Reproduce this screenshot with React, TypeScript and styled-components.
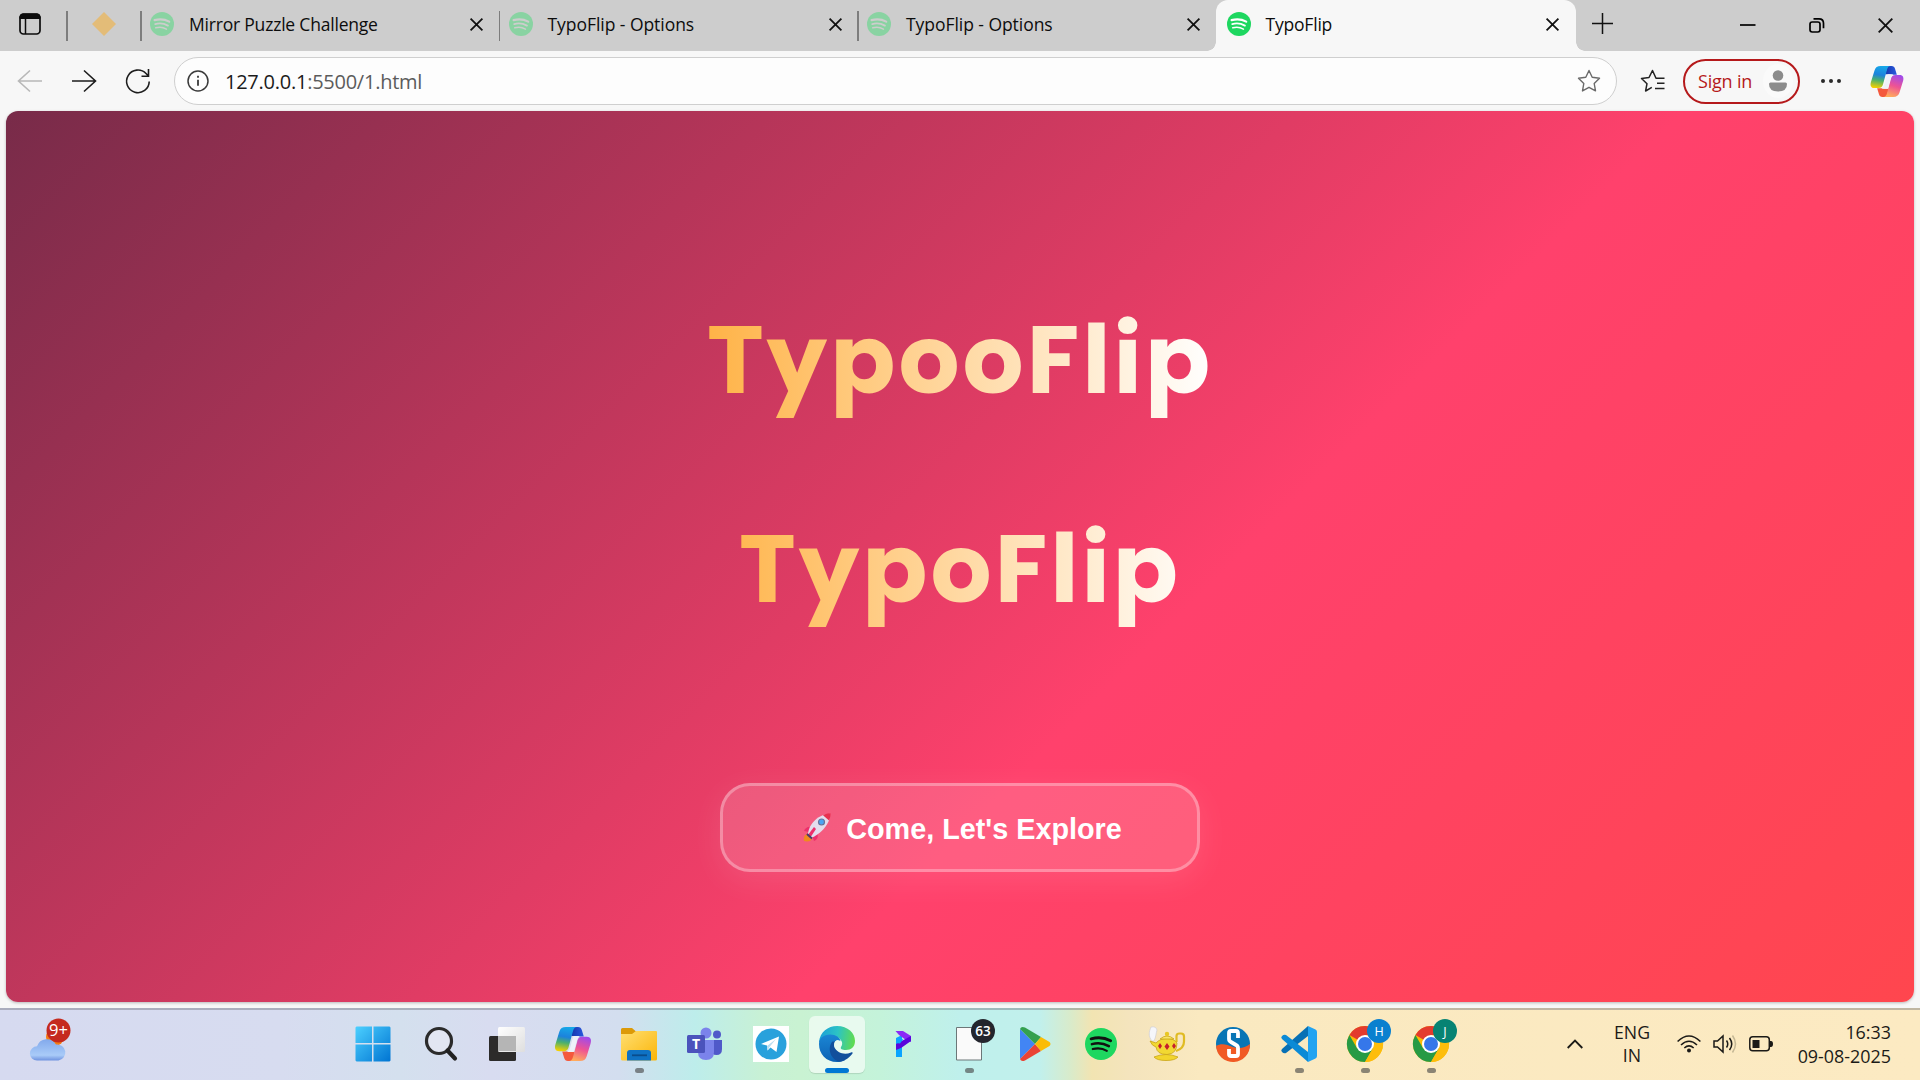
import React from 'react';
import styled, { createGlobalStyle } from 'styled-components';

const ui = '"Segoe UI", "Open Sans", "Noto Sans", sans-serif';

const Global = createGlobalStyle`
  * { box-sizing: border-box; }
  body { margin: 0; overflow: hidden; font-family: ${ui}; }
  svg { display: block; flex: none; overflow: visible; }
`;

const Screen = styled.div`
  width: 1920px;
  height: 1080px;
  display: flex;
  flex-direction: column;
  background: #f7f7f7;
  overflow: hidden;
`;

const TabStrip = styled.div`
  height: 51px;
  flex: none;
  display: flex;
  background: #cdcdcd;
`;
const StripLead = styled.div`
  width: 66px;
  padding: 13px 0 0 19px;
`;
const Divider = styled.i`
  width: 1.5px;
  height: 30px;
  margin: 11px 0.5px 0 0;
  flex: none;
  background: #7d7d7d;
`;
const Pinned = styled.div`
  width: 72px;
  padding: 12px 0 0 24px;
`;
const Tab = styled.div<{ $active?: boolean }>`
  width: ${p => (p.$active ? '360px' : '356.5px')};
  height: 51px;
  flex: none;
  display: flex;
  align-items: center;
  padding: 0 ${p => (p.$active ? '17px' : '15.5px')} 3px ${p => (p.$active ? '11px' : '8px')};
  color: #0c0c0c;
  font-size: 17.5px;
  position: relative;
  background: ${p => (p.$active ? '#f7f7f7' : 'transparent')};
  border-radius: ${p => (p.$active ? '12px 12px 0 0' : '0')};
  &::before, &::after {
    content: '';
    display: ${p => (p.$active ? 'block' : 'none')};
    position: absolute;
    bottom: 0;
    width: 9px;
    height: 9px;
  }
  &::before { left: -9px; background: radial-gradient(circle at 0 0, transparent 8.5px, #f7f7f7 9px); }
  &::after { right: -9px; background: radial-gradient(circle at 100% 0, transparent 8.5px, #f7f7f7 9px); }
`;
const TabTitle = styled.span<{ $track: number }>`
  flex: 1;
  margin-left: 15px;
  padding-bottom: 1px;
  white-space: nowrap;
  letter-spacing: ${p => p.$track}px;
`;
const NewTab = styled.div`
  padding: 13px 0 0 16px;
`;
const WindowButtons = styled.div`
  margin-left: auto;
  display: flex;
  padding: 18px 27px 0 0;
  gap: 53px;
`;

const Toolbar = styled.div`
  height: 60px;
  flex: none;
  display: flex;
  align-items: center;
  padding: 0 15px 0 17px;
`;
const Nav = styled.div`
  width: 157px;
  display: flex;
  gap: 29px;
`;
const Address = styled.div`
  width: 1443px;
  height: 48px;
  display: flex;
  align-items: center;
  padding: 0 15px 0 12px;
  border: 1.5px solid #cfcfcf;
  border-radius: 24px;
  background: #fdfdfd;
`;
const Url = styled.span`
  flex: 1;
  margin-left: 16px;
  font-size: 20px;
  letter-spacing: -0.25px;
  color: #5b5b5b;
  b { font-weight: 400; color: #1b1b1b; }
`;
const Collections = styled.div`
  margin-left: 23px;
`;
const SignIn = styled.div`
  width: 117px;
  height: 45px;
  margin-left: 18px;
  padding: 0 5px 0 13px;
  display: flex;
  align-items: center;
  justify-content: space-between;
  border: 2px solid #b5191b;
  border-radius: 23px;
  color: #b5191b;
  font-size: 18px;
  letter-spacing: -0.2px;
`;
const Avatar = styled.span`
  width: 30px;
  height: 34px;
  border-radius: 50%;
  background: #fafafa;
  display: grid;
  place-items: center;
`;
const More = styled.div`
  display: flex;
  gap: 4px;
  margin: 0 29px 0 21px;
  i { width: 4px; height: 4px; border-radius: 50%; background: #2a2a2a; }
`;

const Page = styled.main`
  height: 891px;
  margin: 0 6px 6px;
  flex: none;
  display: flex;
  flex-direction: column;
  align-items: center;
  border-radius: 12px;
  box-shadow: 0 1px 3px rgba(0, 0, 0, 0.25);
  background: linear-gradient(135deg, #782b49 0%, #ff416c 60%, #ff464e 100%);
`;
const Titles = styled.div`
  display: flex;
  flex-direction: column;
  gap: 65px;
  padding-top: 177px;
`;
const Title = styled.h1`
  margin: 0;
  height: 144px;
  line-height: 144px;
  text-align: center;
  font-family: Poppins, Inter, sans-serif;
  font-weight: 700;
  font-size: 96px;
  letter-spacing: 3px;
  color: transparent;
  background: linear-gradient(90deg, #ffb347, #ffffff);
  -webkit-background-clip: text;
  background-clip: text;
`;
const Explore = styled.button`
  width: 480px;
  height: 89px;
  margin-top: 142px;
  padding: 0 0 0 5px;
  display: flex;
  align-items: center;
  justify-content: center;
  gap: 15px;
  border: 3px solid rgba(255, 255, 255, 0.3);
  border-radius: 30px;
  background: rgba(255, 255, 255, 0.15);
  background-clip: border-box;
  box-shadow: 0 8px 32px rgba(255, 255, 255, 0.1);
  color: #fff;
  font: 700 28.8px "Liberation Sans", Arial, sans-serif;
`;
const ExploreText = styled.span`
  padding-top: 3px;
`;

const Taskbar = styled.footer`
  height: 72px;
  flex: none;
  display: flex;
  border-top: 2px solid rgba(110, 110, 120, 0.42);
  background: linear-gradient(90deg, #d6daf0 0, #d7dcf0 280px, #d4e0ee 400px, #d8dcf0 490px, #d3deef 620px,
    #bdedeb 695px, #c8f1d4 765px, #c9f2d2 800px, #c4f3da 880px, #bff0ec 960px, #c1f0ec 1040px, #d8ebcb 1070px,
    #f2e4b2 1092px, #f4e4bd 1130px, #fae9c0 1200px, #fceac2 1920px);
  color: #1b1a17;
`;
const Weather = styled.div`
  width: 342px;
  padding: 8px 0 0 30px;
`;
const Apps = styled.div`
  display: grid;
  grid-template-columns: repeat(17, 66px);
`;
const AppButton = styled.div<{ $active?: boolean }>`
  height: 57px;
  width: 56px;
  margin: 6px 5px 0;
  padding-top: 10px;
  display: flex;
  flex-direction: column;
  align-items: center;
  border-radius: 6px;
  background: ${p => (p.$active ? 'rgba(255,255,255,0.6)' : 'none')};
  box-shadow: ${p => (p.$active ? '0 1px 1px rgba(0,0,0,0.12)' : 'none')};
`;
const Indicator = styled.i<{ $on?: 'idle' | 'focus' }>`
  width: ${p => (p.$on === 'focus' ? 24 : 9)}px;
  height: 5px;
  margin-top: 6px;
  border-radius: 3px;
  background: ${p => (p.$on === 'focus' ? '#0078d4' : p.$on ? 'rgba(70,70,70,0.62)' : 'transparent')};
`;
const Tray = styled.div`
  margin-left: auto;
  display: flex;
  align-items: center;
  padding: 0 29px 2px 0;
`;
const Lang = styled.div`
  width: 46px;
  margin: 0 22px 0 26px;
  text-align: center;
  font-size: 17.7px;
  line-height: 23px;
`;
const Status = styled.div`
  display: flex;
  align-items: center;
  gap: 12px;
`;
const Clock = styled.div`
  width: 96px;
  margin-left: 22px;
  text-align: right;
  font-size: 17.9px;
  line-height: 24px;
  white-space: nowrap;
`;

const Spotify = ({ size = 24, body = '#1ed760', bars = '#fff' }) => (
  <svg width={size} height={size} viewBox="0 0 24 24">
    <circle cx="12" cy="12" r="12" fill={body} />
    <g fill="none" stroke={bars} strokeLinecap="round">
      <path d="M4.600 8.100C9.300 6.800 14.900 7.200 19.200 9.600" strokeWidth="2.200" />
      <path d="M5.200 12.100C9.400 10.900 14 11.400 17.900 13.600" strokeWidth="1.900" />
      <path d="M5.800 15.800C9.300 14.900 13.200 15.200 16.400 17.100" strokeWidth="1.600" />
    </g>
  </svg>
);

const Cross = ({ size = 13, w = 1.8 }) => (
  <svg width={size} height={size} viewBox="0 0 13 13">
    <path d="M.6 .6 12.400 12.400M12.400 .6 .6 12.400" stroke="#111" strokeWidth={w} />
  </svg>
);

const Copilot = ({ id, w = 36, h = 34 }: { id: string; w?: number; h?: number }) => (
  <svg width={w} height={h} viewBox="0 0 36 34">
    <defs>
      <linearGradient id={id + 'a'} x1="0.5" y1="0" x2="0.35" y2="1">
        <stop offset="0" stopColor="#16a7e8" /><stop offset=".4" stopColor="#1c82dc" />
        <stop offset=".65" stopColor="#4bb06d" /><stop offset="1" stopColor="#f5d000" />
      </linearGradient>
      <linearGradient id={id + 'b'} x1="0.7" y1="0" x2="0.4" y2="1">
        <stop offset="0" stopColor="#a04bea" /><stop offset=".5" stopColor="#ee5394" /><stop offset="1" stopColor="#ffab5c" />
      </linearGradient>
      <linearGradient id={id + 'c'} x1="1" y1="0" x2="0" y2="0">
        <stop offset="0" stopColor="#2a5be0" /><stop offset="1" stopColor="#1636ac" />
      </linearGradient>
    </defs>
    <path d="M18 0h5c2.200 0 3.200 1 3.800 3l2 6.500h-3c-2.800 0-4-.5-6.500-.5h-3z" fill={`url(#${id}c)`} />
    <path d="M18 34h-5c-2.200 0-3.200-1-3.800-3l-2-6.500h3c2.800 0 4 .5 6.500 .5h3z" fill="#f4593d" />
    <path d="M11 0h11c-2 0-3.200 1.200-4 4l-4.200 15.500c-.9 3.300-2 4.700-5.300 4.700H4.200C.3 24.200-.7 21.200 .4 17.500L4.300 4.800C5.400 1.400 7.300 0 11 0z" fill={`url(#${id}a)`} />
    <path d="M25 34H14c2 0 3.200-1.200 4-4l4.200-15.500c.9-3.300 2-4.700 5.300-4.700h4.300c3.900 0 4.900 3 3.800 6.700l-3.900 12.700C30.600 32.600 28.700 34 25 34z" fill={`url(#${id}b)`} />
    <path d="M19.500 9h5.500c-1.800 1-2.500 2.500-3.300 5.500l-2.600 9.500c-.2 .8-.7 1-1.500 1H12c2-1.200 2.800-3 3.300-5l2.400-9c.4-1.400 .8-2 1.800-2z" fill="#eef1fa" />
  </svg>
);

const StarPath = 'M12 1.500l3.200 6.800 7.300 1-5.300 5.200 1.300 7.400L12 18.300 5.500 21.900l1.300-7.400L1.500 9.300l7.300-1z';

const Rocket = () => (
  <svg width="28" height="29" viewBox="0 0 28 29">
    <path d="M1 28c-1-4 1-7 4-7l4 4c0 3-4 4-8 3z" fill="#f08a1d" />
    <path d="M9 14c-4-1-7 1-8 4l5 1zM14 20c2 4 0 7-3 8l-2-6z" fill="#ed2f6b" />
    <path d="M5 22c0-9 8-20 22-21.500C28 10 18 21 8 25z" fill="#e4dcec" />
    <path d="M20 2.300C23 .7 26 .2 27.500 .4c.2 2-.3 4.500-1.500 7z" fill="#e8304f" />
    <path d="M4.500 22.500 11 14l2 2-6 9z" fill="#ed2f6b" />
    <path d="M4 21l5 4.500" stroke="#4b3a69" strokeWidth="2" />
    <circle cx="18.500" cy="9" r="3" fill="#4ba4f3" stroke="#69739a" strokeWidth="1.200" />
  </svg>
);

const Chrome = ({ letter, color }: { letter: string; color: string }) => (
  <svg width="36" height="36" viewBox="0 0 36 36">
    <circle cx="18" cy="18" r="18" fill="#fbbc05" />
    <path d="M18 18 2.400 9A18 18 0 0 1 33.600 9z" fill="#e33b2e" />
    <path d="M2.400 9A18 18 0 0 0 18 36l7.800-13.500L18 18l-7.800 4.500z" fill="#269a45" />
    <path d="M18 9h15.600A18 18 0 0 1 18 36l7.800-13.500z" fill="#fdbd0b" />
    <circle cx="18" cy="18" r="9" fill="#fff" /><circle cx="18" cy="18" r="7" fill="#3577ea" />
    <circle cx="32" cy="5" r="12" fill={color} />
    <text x="32" y="9.800" fontSize="12.500" fontFamily={ui} fill="#fff" textAnchor="middle">{letter}</text>
  </svg>
);

const icons: Record<string, React.ReactNode> = {
  start: (
    <svg width="36" height="36" viewBox="2 0 36 36">
      <defs><linearGradient id="win" x1="0" y1="0" x2="1" y2="1"><stop offset="0" stopColor="#4cd0ff" /><stop offset="1" stopColor="#0074d2" /></linearGradient></defs>
      <path d="M1.500 .5H17V17H.5V1.500zM18.500 .5H34.500l1 1V17h-17zM.5 18.500H17v17H1.500l-1-1zM18.500 18.500h17v16l-1 1h-16z" fill="url(#win)" />
    </svg>
  ),
  search: (
    <svg width="36" height="36" viewBox="0 0 36 36">
      <circle cx="16" cy="15" r="12.500" fill="#e2e6f2" stroke="#2b2b2b" strokeWidth="3.200" />
      <path d="M24.500 24.500l7.500 8" stroke="#222" strokeWidth="4.200" strokeLinecap="round" />
    </svg>
  ),
  view: (
    <svg width="36" height="36" viewBox="0 0 36 36">
      <defs><linearGradient id="tv" x1="0" y1="0" x2="1" y2="1"><stop offset="0" stopColor="#fff" /><stop offset="1" stopColor="#dedede" /></linearGradient></defs>
      <rect x="0" y="10" width="27" height="25" rx="1.500" fill="#2c2b2a" />
      <rect x="9" y="1" width="27" height="25" rx="1.500" fill="url(#tv)" />
      <path d="M9 10h18v15H9z" fill="#b5b5b5" />
    </svg>
  ),
  copilot: <svg width="36" height="36"><g transform="translate(0 1)"><Copilot id="tc" w={36} h={34} /></g></svg>,
  files: (
    <svg width="36" height="36" viewBox="0 0 36 36">
      <defs><linearGradient id="fold" x1="0" y1="0" x2="1" y2="1"><stop offset="0" stopColor="#ffdf72" /><stop offset="1" stopColor="#fbb508" /></linearGradient></defs>
      <path d="M0 3.500Q0 2 1.500 2H11l4 3.500h20V12H0z" fill="#dc9a08" />
      <path d="M0 8h11l4-3h20q1 0 1 1v27q0 1.500-1.500 1.500h-33Q0 34.500 0 33z" fill="url(#fold)" />
      <path d="M6 34.500V27q0-3 3-3h18q3 0 3 3v7.500z" fill="#0f72c4" />
      <path d="M11 29.300h15" stroke="#0a4c8c" strokeWidth="1.800" />
    </svg>
  ),
  teams: (
    <svg width="36" height="36" viewBox="0 0 36 36">
      <circle cx="19" cy="7" r="5.500" fill="#7b83eb" /><circle cx="30" cy="8.500" r="4" fill="#5059c9" />
      <path d="M26 14h9v9q0 6-5.500 6T24 24z" fill="#5059c9" />
      <path d="M11 14h16v12q0 8-8 8t-8-8z" fill="#7b83eb" />
      <rect x="0" y="9" width="18" height="18" rx="1.500" fill="#4b53bc" />
      <text x="9" y="23" fontSize="14" fontWeight="700" fontFamily={ui} fill="#fff" textAnchor="middle">T</text>
    </svg>
  ),
  telegram: (
    <svg width="36" height="36" viewBox="0 0 36 36">
      <path d="M0 0h36v36H0z" fill="#fff" /><circle cx="18" cy="18" r="15.500" fill="#29a1dc" />
      <path d="M8 18 26 10.500 23.500 26 17.500 21.500 14.500 24.500 14 19.500z" fill="#fff" /><path d="M14 20l9-7-6.500 8-2 3.500z" fill="#b9dcf0" />
    </svg>
  ),
  edge: (
    <svg width="36" height="36" viewBox="0 0 36 36">
      <defs>
        <linearGradient id="eg" x1="0" y1=".4" x2="1" y2=".5"><stop offset="0" stopColor="#1b9fd8" /><stop offset=".5" stopColor="#2cc3c5" /><stop offset="1" stopColor="#61dc4e" /></linearGradient>
        <linearGradient id="eb" x1="0" y1="0" x2="0" y2="1"><stop offset="0" stopColor="#1b86d4" /><stop offset="1" stopColor="#0c62b4" /></linearGradient>
      </defs>
      <path d="M0 16C1 6 9 0 18 0c11 0 18 7 18 15 0 6-4 9-9 9-4 0-6-1-5-3 3-4 0-8-4-10z" fill="url(#eg)" />
      <path d="M0 18C0 12 5 8.500 11 8.500c6 0 10 3 10.500 6.500C18 13 14 16 14 21c0 8 6 13 12 13-3 1.500-5 2-8 2C7 36 0 28 0 18z" fill="url(#eb)" />
      <path d="M13.500 15.500C8 21 11 34 21 35.700 27 34.500 31 31 33.500 27.500c.5-1-.5-1.500-1.500-1-7 3-14 0-16.500-5-.8-2-.4-4 .5-6z" fill="#124f9c" />
      <path d="M18 14.300c-3 1-3.200 4.500-2 7 1.200 2.400 3.500 3.400 5.600 3.200-1.200-1-1-2.500-.2-3.700 1.500-2.500-.5-6.800-3.400-6.500z" fill="#e9faee" />
    </svg>
  ),
  p: (
    <svg width="36" height="36" viewBox="0 0 36 36">
      <path d="M11 12l6-3v22h-6z" fill="#0aa4ff" /><path d="M10.500 5H18l8 5v6l-5-2-7-5z" fill="#8c2bf5" /><path d="M11 18 26 10v5l-10 7-5 2z" fill="#5a06dc" />
      <path d="M11 17l5-5 2 1.500-3 4z" fill="#0aa4ff" />
    </svg>
  ),
  doc: (
    <svg width="36" height="36" viewBox="0 0 36 36">
      <path d="M5.500 1.500h25v32.500h-25z" fill="#fafafa" stroke="#6c7778" strokeWidth="1" />
      <circle cx="32" cy="5" r="12" fill="#23252d" />
      <text x="32" y="10" fontSize="13.500" fontWeight="600" fontFamily={ui} fill="#fff" textAnchor="middle">63</text>
    </svg>
  ),
  play: (
    <svg width="36" height="36" viewBox="0 0 36 36">
      <path d="M3 3v30l15-15z" fill="#4285f4" /><path d="M3 3q1-3 5-1.500L24 11l-6 7z" fill="#34a04e" />
      <path d="M3 33q1 3 5 1.500L24 25l-6-7z" fill="#ea4335" /><path d="M24 11l8.500 5q2 2 0 4L24 25l-6-7z" fill="#fbbc04" />
    </svg>
  ),
  spotify: <svg width="36" height="36"><g transform="translate(2 2)"><Spotify size={32} body="#1ed760" bars="#111" /></g></svg>,
  lamp: (
    <svg width="36" height="36" viewBox="0 0 36 36">
      <path d="M3 15C-1 10 0 6 2 1q5-1 6 3c-1 3-1 7-3 11z" fill="#f5f6fa" stroke="#c9cad2" strokeWidth=".6" />
      <path d="M27.500 16V10q0-2.500 3-2.500h1.500q3 0 3 3v5q0 7-8 9.500" fill="none" stroke="#e0bb22" strokeWidth="2.200" />
      <path d="M1 15l6 2q4-4.500 11-4.500T28 17q0 11-10 11.500Q8 28.500 7 21q-4-1-6-6z" fill="#f2d832" stroke="#c9a416" strokeWidth=".8" />
      <path d="M11 13q7-6 14 0z" fill="#f9e566" stroke="#c9a416" strokeWidth=".8" /><circle cx="18" cy="8" r="2.200" fill="#e9c722" />
      <path d="M5 31q12-5 24 0-3 3.500-12 3.500T5 31z" fill="#f2d52c" stroke="#c9a416" strokeWidth=".8" />
      <path d="M11 17l2 3-2 3-2-3zM18 17l2.500 3.500L18 24l-2.500-3.500zM25 17l2 3-2 3-2-3z" fill="#c6202c" />
    </svg>
  ),
  s: (
    <svg width="36" height="36" viewBox="0 0 36 36">
      <circle cx="18" cy="18" r="17" fill="#0875b5" /><path d="M1 20c5-3 10-2 17 1 6 2 12 1 17-3a17 17 0 0 1-34 2z" fill="#f15a24" />
      <path d="M23 12V7q0-2-2-2h-5q-2 0-2 2v6q0 2 2 3l5 3q2 1 2 3v6q0 2-2 2h-5q-2 0-2-2v-5" fill="none" stroke="#fff" strokeWidth="3.800" />
    </svg>
  ),
  code: (
    <svg width="36" height="36" viewBox="0 0 36 36">
      <path d="M1 23 27 0v10L5 27q-2 1-4-1-1.500-1.500 0-3z" fill="#0770b5" />
      <path d="M1 13 27 36V26L5 9Q3 8 1 10q-1.500 1.500 0 3z" fill="#0b8ad6" />
      <path d="M27 0l7.500 3.500Q36 4.300 36 6v24q0 1.700-1.500 2.500L27 36z" fill="#22a3f1" />
    </svg>
  ),
  h: <Chrome letter="H" color="#0a80cf" />,
  j: <Chrome letter="J" color="#078373" />,
};
const running = ['files', 'doc', 'code', 'h', 'j'];

export default function App() {
  return (
    <Screen>
      <Global />
      <TabStrip>
        <StripLead>
          <svg width="22" height="22" viewBox="0 0 22 22">
            <rect x="1" y="1" width="20" height="20" rx="3.500" fill="none" stroke="#0c0c0c" strokeWidth="1.700" />
            <path d="M1 5.500V4q0-3 3-3h14q3 0 3 3v1.500z" fill="#0c0c0c" stroke="#0c0c0c" strokeWidth="1" />
            <path d="M6.500 5v16" stroke="#0c0c0c" strokeWidth="1.500" />
          </svg>
        </StripLead>
        <Divider />
        <Pinned><svg width="24" height="24"><path d="M12 0 24 12 12 24 0 12z" fill="#e3bc78" /></svg></Pinned>
        {['Mirror Puzzle Challenge', 'TypoFlip - Options', 'TypoFlip - Options'].map((t, i) => (
          <React.Fragment key={i}>
            <Divider />
            <Tab>
              <Spotify body="#89d3a2" bars="#cdcdcd" />
              <TabTitle $track={i ? -0.05 : -0.2}>{t}</TabTitle>
              <Cross />
            </Tab>
          </React.Fragment>
        ))}
        <Tab $active>
          <Spotify />
          <TabTitle $track={-0.2}>TypoFlip</TabTitle>
          <Cross />
        </Tab>
        <NewTab><svg width="21" height="21"><path d="M10.500 0v21M0 10.500h21" stroke="#111" strokeWidth="1.500" /></svg></NewTab>
        <WindowButtons>
          <svg width="16" height="16"><path d="M0 7h15.500" stroke="#000" strokeWidth="1.700" /></svg>
          <svg width="16" height="16" viewBox="0 0 16 16" fill="none" stroke="#000" strokeWidth="1.700">
            <rect x="1" y="4" width="10" height="10" rx="2.200" /><path d="M4.500 .8H10q4.500 0 4.500 4.500v5" />
          </svg>
          <Cross size={15} w={1.6} />
        </WindowButtons>
      </TabStrip>

      <Toolbar>
        <Nav>
          <svg width="25" height="24" fill="none" stroke="#b8b8b8" strokeWidth="1.600"><path d="M25 12H1.500M13 1.500 1.500 12 13 22.500" /></svg>
          <svg width="25" height="24" fill="none" stroke="#1d1d1d" strokeWidth="1.600"><path d="M1 12h23.500M13 1.500 24.500 12 13 22.500" /></svg>
          <svg width="25" height="24" fill="none" stroke="#1d1d1d" strokeWidth="1.600"><path d="M24.200 12.500A11.300 11.300 0 1 1 21 4.500l2.500 2.500M23.500 0v7.200H16.500" /></svg>
        </Nav>
        <Address>
          <svg width="22" height="22" fill="none" stroke="#3a3a3a" strokeWidth="1.500"><circle cx="11" cy="11" r="10" /><path d="M11 9.800v6M11 5.800v2" strokeWidth="1.800" /></svg>
          <Url><b>127.0.0.1</b>:5500/1.html</Url>
          <svg width="24" height="24" viewBox="0 0 24 24" fill="none" stroke="#6a6a6a" strokeWidth="1.400" strokeLinejoin="round"><path d={StarPath} /></svg>
        </Address>
        <Collections>
          <svg width="25" height="24" viewBox="0 0 25 24" fill="none" stroke="#222" strokeWidth="1.500" strokeLinejoin="round">
            <path d="M24.500 9.300H16L12.500 1.500 9 8.500l-7.500 1 5.500 5.200-1.400 7.300 6.200-3.700M17 14.300h7.500M15 19.500h9.500" />
          </svg>
        </Collections>
        <SignIn>
          Sign in
          <Avatar><svg width="18" height="22" fill="#8c8c8c"><circle cx="9" cy="5.500" r="5.300" /><path d="M0 14q0-1.500 1.500-1.500h15Q18 12.500 18 14q0 7.500-9 7.500T0 14z" /></svg></Avatar>
        </SignIn>
        <More><i /><i /><i /></More>
        <Copilot id="tb" w={34} h={31} />
      </Toolbar>

      <Page>
        <Titles>
          <Title>TypooFlip</Title>
          <Title>TypoFlip</Title>
        </Titles>
        <Explore><Rocket /><ExploreText>Come, Let's Explore</ExploreText></Explore>
      </Page>

      <Taskbar>
        <Weather>
          <svg width="42" height="44" viewBox="0 0 42 44">
            <circle cx="25" cy="19" r="9" fill="#f57c13" />
            <defs><linearGradient id="cl" x1="0" y1="0" x2="0" y2="1"><stop offset="0" stopColor="#82a9ec" /><stop offset=".75" stopColor="#a9cbf8" /><stop offset="1" stopColor="#6e92df" /></linearGradient></defs>
            <path d="M7 42.500a7 7 0 0 1 0-14.200A10.500 10.500 0 0 1 26 26.500a8 8 0 0 1 2.500 16z" fill="url(#cl)" />
            <circle cx="28.500" cy="12.500" r="12" fill="#c52a1e" />
            <text x="28.500" y="18" fontSize="16.500" fontFamily={ui} fill="#fff" textAnchor="middle">9+</text>
          </svg>
        </Weather>
        <Apps>
          {Object.keys(icons).map(k => (
            <AppButton key={k} $active={k === 'edge'}>
              {icons[k]}
              <Indicator $on={k === 'edge' ? 'focus' : running.includes(k) ? 'idle' : undefined} />
            </AppButton>
          ))}
        </Apps>
        <Tray>
          <svg width="16" height="10" fill="none" stroke="#1b1a17" strokeWidth="1.800"><path d="M.7 9 8 1.500 15.300 9" /></svg>
          <Lang>ENG<br />IN</Lang>
          <Status>
            <svg width="24" height="18" viewBox="0 0 24 18" fill="none" stroke="#1b1a17" strokeWidth="1.600">
              <path d="M.6 6.500q11.400-11 22.800 0M4 10q8-7.500 16 0M7.300 13q4.700-4.200 9.400 0" /><circle cx="12" cy="15.600" r="2" fill="#1b1a17" stroke="none" />
            </svg>
            <svg width="24" height="20" viewBox="0 0 24 20" fill="none" stroke="#1b1a17" strokeWidth="1.500">
              <path d="M1 7h3.500L10 2v16l-5.500-5H1zM13.500 6.500q2.500 3.500 0 7M16.500 4q4.500 6 0 12" /><path d="M19.500 1.500q6 8.500 0 17" stroke="#c4b795" />
            </svg>
            <svg width="24" height="16" viewBox="0 0 24 16">
              <rect x=".8" y=".8" width="19.500" height="14" rx="3" fill="none" stroke="#1b1a17" strokeWidth="1.500" />
              <path d="M3.500 4h7v8h-7zM21 5h1q2 0 2 3t-2 3h-1z" fill="#1b1a17" />
            </svg>
          </Status>
          <Clock>16:33<br />09-08-2025</Clock>
        </Tray>
      </Taskbar>
    </Screen>
  );
}
